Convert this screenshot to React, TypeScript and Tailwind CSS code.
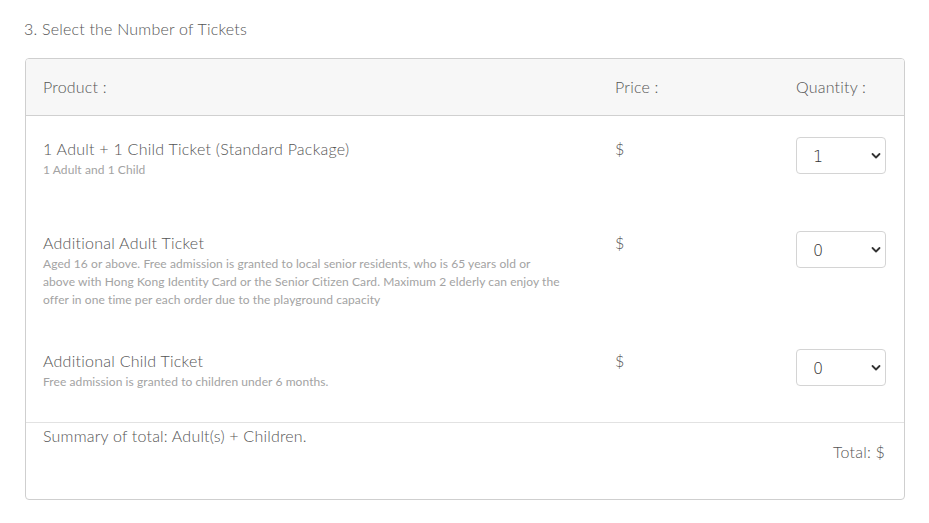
import React from "react";

const Chevron = () => (
  <svg width="10" height="7" viewBox="0 0 10 7" className="absolute right-[5px] top-1/2 -translate-y-1/2 pointer-events-none">
    <path d="M1.5 1.5 L5 5 L8.5 1.5" fill="none" stroke="#333" strokeWidth="1.8" strokeLinecap="round" strokeLinejoin="round" />
  </svg>
);

const Qty = ({ value }: { value: string }) => (
  <div className="relative w-[90px] h-[37px]">
    <select
      defaultValue={value}
      className="appearance-none w-full h-full border border-[#d4d4d4] rounded-[4px] bg-white pl-[16px] pt-[3px] text-[16px] text-[#333] outline-none"
      style={{ fontFamily: "'DejaVu Sans', sans-serif" }}
    >
      {["0", "1", "2", "3", "4", "5"].map((v) => (
        <option key={v} value={v}>{v}</option>
      ))}
    </select>
    <Chevron />
  </div>
);

type Row = { title: string; desc: string[]; qty: string; h: string };

const rows: Row[] = [
  { title: "1 Adult + 1 Child Ticket (Standard Package)", desc: ["1 Adult and 1 Child"], qty: "1", h: "h-[94px]" },
  {
    title: "Additional Adult Ticket",
    desc: [
      "Aged 16 or above. Free admission is granted to local senior residents, who is 65 years old or",
      "above with Hong Kong Identity Card or the Senior Citizen Card. Maximum 2 elderly can enjoy the",
      "offer in one time per each order due to the playground capacity",
    ],
    qty: "0",
    h: "h-[118px]",
  },
  { title: "Additional Child Ticket", desc: ["Free admission is granted to children under 6 months."], qty: "0", h: "h-[73px]" },
];

export default function App() {
  return (
    <div className="bg-white w-[929px] h-[523px] pl-[25px] pt-[17px] font-light" style={{ fontFamily: "Lato, 'Liberation Sans', sans-serif" }}>
      <div className="text-[16px] leading-[24px] text-[#555] -ml-[1px] tracking-[0.2px]">3. Select the Number of Tickets</div>
      <div className="mt-[17px] w-[880px] h-[442px] border border-[#cfcfcf] rounded-[4px] overflow-hidden flex flex-col">
        <div className="h-[57px] shrink-0 bg-[#f7f7f7] border-b border-[#d0d0d0] flex items-center text-[16px] text-[#555] tracking-[0.2px]">
          <div className="pl-[17px] w-[589px]">Product :</div>
          <div className="w-[181px]">Price :</div>
          <div>Quantity :</div>
        </div>
        <div className="pt-[21px] flex flex-col">
          {rows.map((r) => (
            <div key={r.title} className={`${r.h} flex items-start`}>
              <div className="pl-[17px] w-[589px]">
                <div className="text-[16px] leading-[24px] text-[#555] tracking-[0.25px]">{r.title}</div>
                <div className="text-[12px] leading-[18px] text-[#a3a3a3] tracking-[0.08px] font-normal">
                  {r.desc.map((d) => (
                    <div key={d}>{d}</div>
                  ))}
                </div>
              </div>
              <div className="w-[181px] text-[16px] leading-[24px] text-[#555]">$</div>
              <div>
                <Qty value={r.qty} />
              </div>
            </div>
          ))}
        </div>
        <div className="border-t border-[#e2e2e2] flex-1 pl-[17px] pr-[19px] pt-[1px] text-[16px] leading-[24px] text-[#555] tracking-[0.2px]">
          <div>Summary of total: Adult(s) + Children.</div>
          <div className="text-right -mt-[8px]">Total: $</div>
        </div>
      </div>
    </div>
  );
}
